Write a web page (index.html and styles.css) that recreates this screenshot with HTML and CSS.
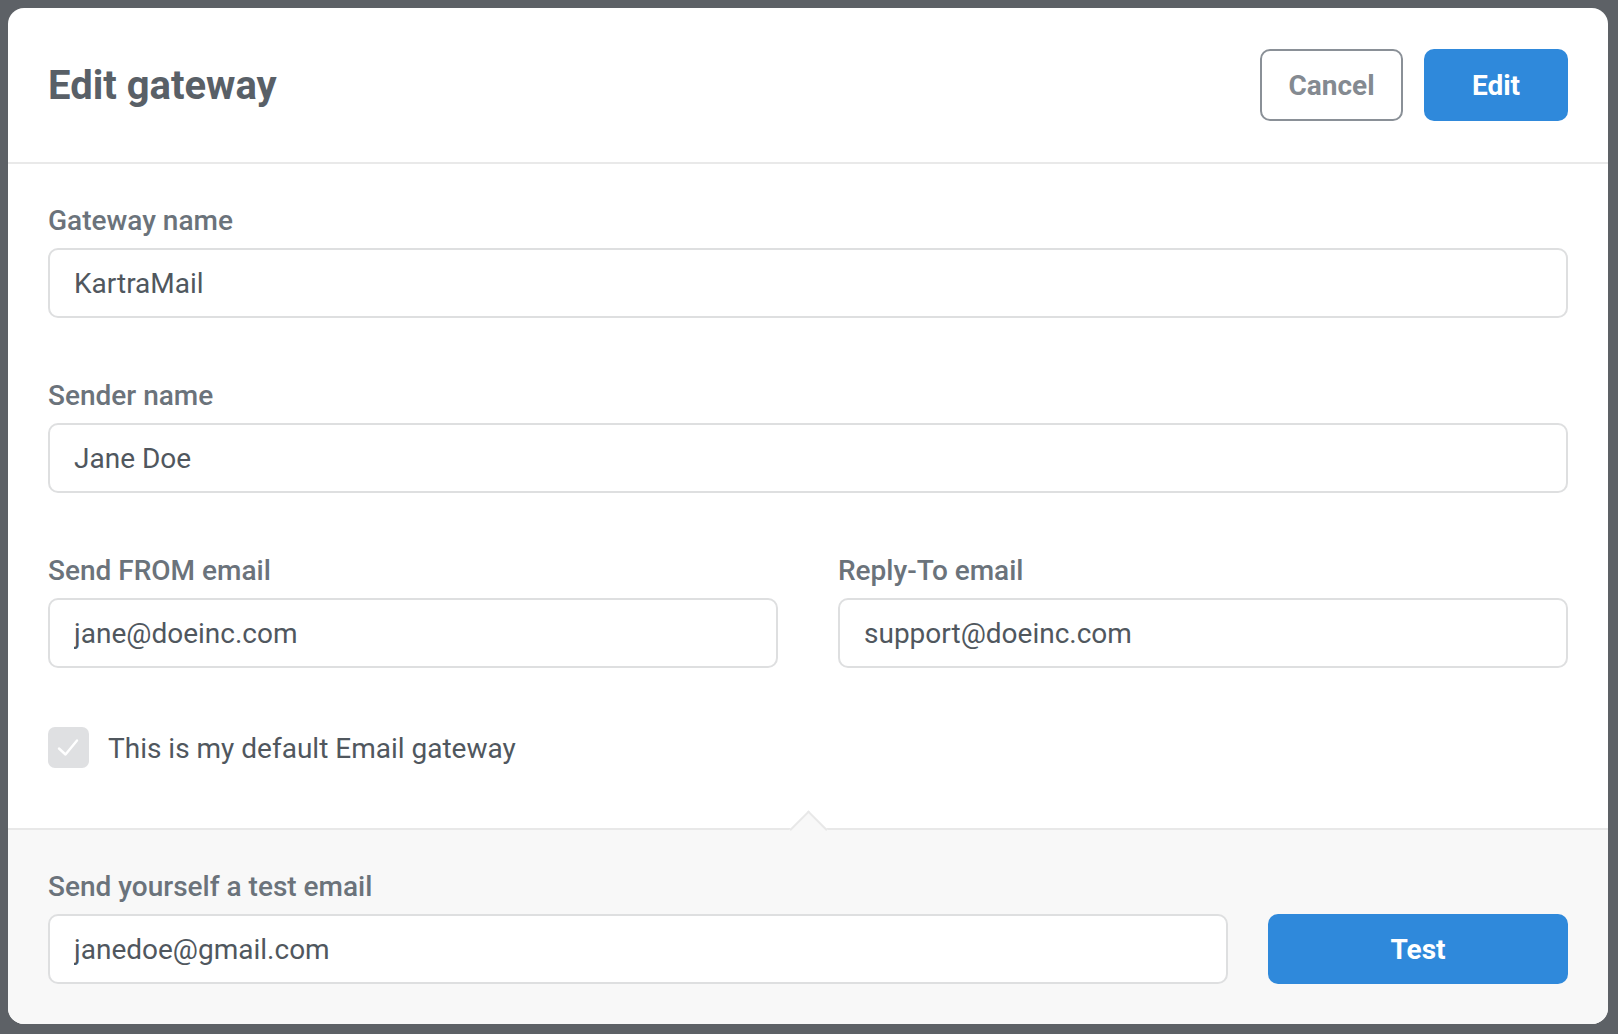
FILE: index.html
```html
<!DOCTYPE html>
<html lang="en">
<head>
    <meta charset="UTF-8">
    <meta name="viewport" content="width=device-width, initial-scale=1.0">
    <title>Edit gateway</title>
    <link rel="stylesheet" href="styles.css">
</head>
<body>
    <div class="modal">
        <div class="modal-header">
            <h1>Edit gateway</h1>
            <div class="actions">
                <button type="button" class="btn btn-outline">Cancel</button>
                <button type="button" class="btn btn-primary">Edit</button>
            </div>
        </div>

        <form class="modal-body">
            <div class="field">
                <label for="gatewayName">Gateway name</label>
                <input type="text" id="gatewayName" value="KartraMail">
            </div>

            <div class="field">
                <label for="senderName">Sender name</label>
                <input type="text" id="senderName" value="Jane Doe">
            </div>

            <div class="field-row">
                <div class="field">
                    <label for="fromEmail">Send FROM email</label>
                    <input type="email" id="fromEmail" value="jane@doeinc.com">
                </div>
                <div class="field">
                    <label for="replyEmail">Reply-To email</label>
                    <input type="email" id="replyEmail" value="support@doeinc.com">
                </div>
            </div>

            <label class="checkbox">
                <span class="box">
                    <svg width="41" height="41" viewBox="0 0 41 41">
                        <path d="M11 21.5 L17.5 27.5 L29 13.5" fill="none" stroke="#fff" stroke-width="2.4" stroke-linecap="round" stroke-linejoin="round"/>
                    </svg>
                </span>
                <span class="checkbox-text">This is my default Email gateway</span>
            </label>
        </form>

        <div class="modal-footer">
            <span class="notch"></span>
            <label for="testEmail">Send yourself a test email</label>
            <div class="test-row">
                <input type="email" id="testEmail" value="janedoe@gmail.com">
                <button type="button" class="btn btn-primary btn-test">Test</button>
            </div>
        </div>
    </div>
</body>
</html>
```

FILE: styles.css
```css
body {
    margin: 0;
    padding: 8px;
    background: #5d6166;
    font-family: Roboto, "Liberation Sans", sans-serif;
}

.modal {
    width: 1600px;
    height: 1016px;
    background: #fff;
    border-radius: 16px;
    overflow: hidden;
    display: flex;
    flex-direction: column;
}

.modal-header {
    height: 154px;
    padding: 0 40px;
    border-bottom: 2px solid #e9e9e9;
    display: flex;
    align-items: center;
    justify-content: space-between;
}

.modal-header h1 {
    margin: 0;
    font-size: 40px;
    font-weight: 700;
    color: #596067;
}

.actions {
    display: flex;
    gap: 21px;
}

.btn {
    height: 72px;
    width: 144px;
    border-radius: 10px;
    font-family: Roboto, "Liberation Sans", sans-serif;
    font-size: 28px;
    font-weight: 700;
    cursor: pointer;
}

.btn-outline {
    width: 143px;
    background: #fff;
    border: 2px solid #8a9097;
    color: #848a91;
}

.btn-primary {
    background: #2f89db;
    border: none;
    color: #fff;
}

.modal-body {
    padding: 40px 40px 60px;
    margin: 0;
}

.field {
    display: flex;
    flex-direction: column;
    margin-bottom: 61px;
}

label {
    font-size: 28px;
    line-height: 34px;
    font-weight: 500;
    color: #6b737b;
    margin-bottom: 10px;
}

input {
    height: 70px;
    box-sizing: border-box;
    padding: 0 24px;
    border: 2px solid #dedfe0;
    border-radius: 10px;
    background: #fff;
    font-family: Roboto, "Liberation Sans", sans-serif;
    font-size: 28px;
    color: #50575e;
    outline: none;
}

.field-row {
    display: grid;
    grid-template-columns: 1fr 1fr;
    gap: 60px;
}

.field-row .field {
    margin-bottom: 59px;
}

.checkbox {
    display: flex;
    align-items: center;
    gap: 19px;
    margin: 0;
    height: 41px;
    font-weight: 400;
    color: #50575e;
}

.checkbox-text {
    padding-top: 3px;
}

.box {
    width: 41px;
    height: 41px;
    border-radius: 7px;
    background: #dfe0e2;
    display: flex;
}

.modal-footer {
    position: relative;
    flex: 1;
    background: #f8f8f8;
    border-top: 2px solid #e8e8e8;
    padding: 40px 40px 0;
    display: flex;
    flex-direction: column;
}

.notch {
    position: absolute;
    top: -14px;
    left: 787px;
    width: 25px;
    height: 25px;
    background: #f8f8f8;
    border-top: 2px solid #e8e8e8;
    border-left: 2px solid #e8e8e8;
    transform: rotate(45deg);
}

.test-row {
    display: flex;
    gap: 40px;
}

.test-row input {
    flex: 1;
}

.btn-test {
    width: 300px;
    height: 70px;
}
```
